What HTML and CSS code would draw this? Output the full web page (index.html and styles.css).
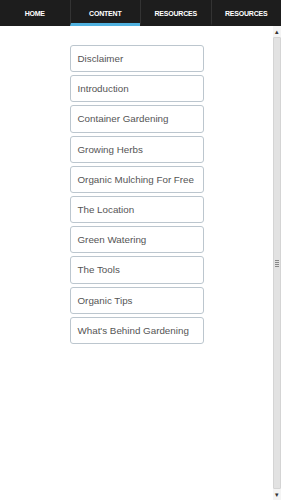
FILE: index.html
```html
<!DOCTYPE html>
<html>
<head>
    <title>Gardening Guide</title>
    <link rel="stylesheet" href="styles.css">
</head>
<body>
    <div class="nav-bar">
        <a class="nav-tab" href="#">Home</a>
        <a class="nav-tab active" href="#">Content</a>
        <a class="nav-tab" href="#">Resources</a>
        <a class="nav-tab" href="#">Resources</a>
    </div>

    <div class="page">
        <div class="content">
            <ul class="topic-list">
                <li class="topic-item">Disclaimer</li>
                <li class="topic-item">Introduction</li>
                <li class="topic-item">Container Gardening</li>
                <li class="topic-item">Growing Herbs</li>
                <li class="topic-item">Organic Mulching For Free</li>
                <li class="topic-item">The Location</li>
                <li class="topic-item">Green Watering</li>
                <li class="topic-item">The Tools</li>
                <li class="topic-item">Organic Tips</li>
                <li class="topic-item">What's Behind Gardening</li>
            </ul>
        </div>

        <!-- Scrollbar of the content frame -->
        <div class="scroll-bar">
            <span class="scroll-arrow">&#9652;</span>
            <div class="scroll-thumb">
                <span class="scroll-grip"></span>
            </div>
            <span class="scroll-arrow">&#9662;</span>
        </div>
    </div>
</body>
</html>
```

FILE: styles.css
```css
body {
    margin: 0;
    background-color: white;
    font-family: "Liberation Sans", Arial, sans-serif;
    height: 500px;
    display: flex;
    flex-direction: column;
    overflow: hidden;
}

/* Top navigation */
.nav-bar {
    display: flex;
    height: 26px;
    background-color: #1d1d1d;
    flex-shrink: 0;
}

.nav-tab {
    flex: 1;
    display: flex;
    align-items: center;
    justify-content: center;
    color: white;
    text-decoration: none;
    text-transform: uppercase;
    font-size: 7px;
    font-weight: bold;
    letter-spacing: -0.2px;
    border-left: 1px solid #333;
    border-bottom: 3px solid transparent;
    padding-top: 4px;
}

.nav-tab:first-child {
    border-left: none;
}

.nav-tab.active {
    border-bottom-color: #4fb0de;
}

/* Page body */
.page {
    flex: 1;
    display: flex;
}

.content {
    flex: 1;
    display: flex;
    justify-content: center;
    padding-top: 19px;
}

.topic-list {
    list-style: none;
    margin: 0;
    padding: 0;
    width: 134px;
    display: flex;
    flex-direction: column;
    gap: 3px;
}

.topic-item {
    height: 25.2px;
    line-height: 25px;
    border: 1px solid #bcc6ce;
    border-radius: 3px;
    padding-left: 7px;
    font-size: 9.8px;
    color: #555;
    white-space: nowrap;
}

/* Scrollbar */
.scroll-bar {
    width: 8px;
    display: flex;
    flex-direction: column;
    align-items: center;
    background-color: #f4f4f4;
    padding: 1px 0;
}

.scroll-arrow {
    font-size: 7px;
    line-height: 9px;
    color: #333;
}

.scroll-thumb {
    flex: 1;
    width: 6px;
    margin: 1px 0;
    background-color: #e2e2e2;
    border: 1px solid #d4d4d4;
    border-radius: 1px;
    display: flex;
    align-items: center;
    justify-content: center;
}

.scroll-grip {
    width: 4px;
    height: 7px;
    background: repeating-linear-gradient(#888 0 1px, transparent 1px 2px);
}
```
